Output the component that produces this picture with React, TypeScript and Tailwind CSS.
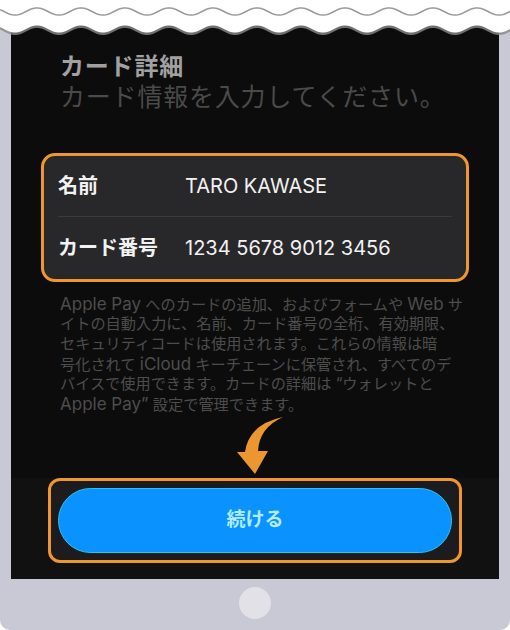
import React from "react";

// wavy torn edge across the top of the frame
function wave(base: number, amp: number, from: number, to: number) {
  const pts: string[] = [];
  for (let x = from; x <= to; x += 2) {
    const y = base + amp * Math.sin((2 * Math.PI * (x - 4)) / 44);
    pts.push(`${x} ${y.toFixed(2)}`);
  }
  return pts;
}

function TornEdge() {
  const bottom = wave(29, 3.5, 0, 512);
  const fill = `M0 0 L512 0 L${bottom.slice().reverse().join(" L")} Z`;
  const shadow = `M0 0 L512 0 L${wave(31.5, 3.5, 0, 512).reverse().join(" L")} Z`;
  const line = `M${wave(11.5, 3.5, 0, 512).join(" L")}`;
  return (
    <svg className="absolute left-0 top-0" width={510} height={40} viewBox="0 0 510 40">
      <path d={shadow} fill="#8a8a8a" opacity={0.8} />
      <path d={fill} fill="#ffffff" />
      <path d={line} fill="none" stroke="#9c9c9c" strokeWidth={1.6} />
    </svg>
  );
}

// latin runs are set a touch larger, like the system font next to kana
function L({ children }: { children: React.ReactNode }) {
  return <span className="text-[17px] leading-[20px]">{children}</span>;
}

export default function App() {
  return (
    <div
      className="relative w-[510px] h-[630px] bg-[#c9c9d5] rounded-b-[10px] overflow-hidden"
      style={{ fontFamily: 'Inter, "Noto Sans CJK JP", sans-serif' }}
    >
      <div className="ml-[11px] w-[488px] h-[579px] bg-[#0c0c0c] flex flex-col">
        <div className="pt-[52px] px-[49px]">
          <div className="text-[24px] leading-[30px] tracking-[0.8px] font-bold text-[#a1a1a1]">カード詳細</div>
          <div className="text-[25px] leading-[30px] tracking-[0.8px] text-[#4a4a4a]">カード情報を入力してください。</div>
        </div>

        <div className="mt-[41px] mx-[30px] h-[129px] rounded-[14px] border-[3px] border-[#f0962e] bg-[#28282a] px-[14px] flex flex-col text-[20px] text-[#f2f2f2]">
          <div className="h-[61px] flex items-center border-b border-[#3a3a3c]">
            <span className="w-[127px] font-semibold">名前</span>
            <span>TARO KAWASE</span>
          </div>
          <div className="flex-1 flex items-center">
            <span className="w-[127px] font-semibold">カード番号</span>
            <span>1234 5678 9012 3456</span>
          </div>
        </div>

        <div className="mt-[12px] px-[49px] text-[15.2px] leading-[20px] text-[#4d4d4d] whitespace-nowrap [&>div]:h-[20px]">
          <div><L>Apple Pay</L> へのカードの追加、およびフォームや <L>Web</L> サ</div>
          <div>イトの自動入力に、名前、カード番号の全桁、有効期限、</div>
          <div>セキュリティコードは使用されます。これらの情報は暗</div>
          <div>号化されて <L>iCloud</L> キーチェーンに保管され、すべてのデ</div>
          <div>バイスで使用できます。カードの詳細は “ウォレットと</div>
          <div><L>Apple Pay”</L> 設定で管理できます。</div>
        </div>

        <div className="h-[64px]">
          <svg width={488} height={64} viewBox="11 414 488 64">
            <path
              d="M283 417 Q249 424 245 452 L237 452 L255 474 L268 451 L258 451 Q259 428 283 417 Z"
              fill="#ec962f"
            />
          </svg>
        </div>

        <div className="flex-1 bg-[#111112] px-[37px]">
          <div className="h-[85px] rounded-[12px] border-[3px] border-[#f0962e] bg-[#1c1c1e] px-[7px] flex items-center">
            <div className="w-full h-[65px] rounded-full bg-[#0a92fe] border border-[#28c6f2] flex items-center justify-center text-[19px] font-bold text-[#b4ecff]">
              続ける
            </div>
          </div>
        </div>
      </div>

      <div className="flex justify-center pt-[8px]">
        <div className="w-[32px] h-[32px] rounded-full bg-[#e1e1e7]" />
      </div>

      <TornEdge />
    </div>
  );
}
